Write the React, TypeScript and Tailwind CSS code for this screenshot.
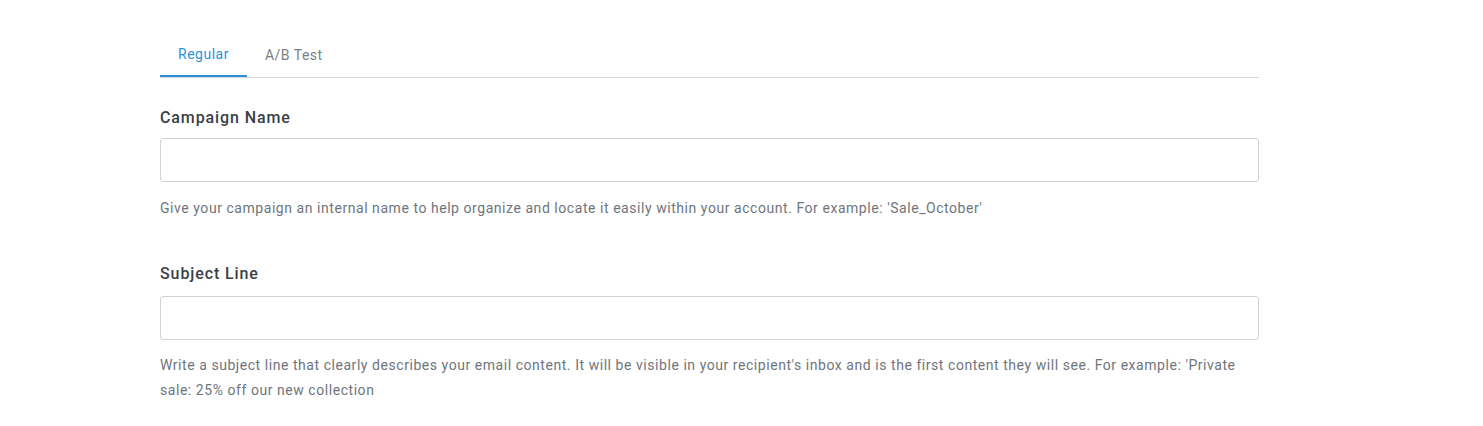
export default function App() {
  return (
    <div className="min-h-[426px] bg-white" style={{ fontFamily: 'Roboto, "Liberation Sans", sans-serif' }}>
      <div className="ml-[160px] w-[1099px] pt-[33px]">
        <div className="flex border-b border-[#d6d9dd]">
          <div className="px-[18px] h-[44px] flex items-center text-[14px] tracking-[0.5px] text-[#2d8fd9] border-b-2 border-[#2d8fd9] -mb-px">Regular</div>
          <div className="px-[18px] h-[44px] flex items-center text-[14px] tracking-[0.5px] text-[#7a8089]">A/B Test</div>
        </div>
        <div className="mt-[30px] text-[16px] font-medium tracking-[0.9px] text-[#3a3f47] leading-[20px]">Campaign Name</div>
        <input className="mt-[10px] block w-full h-[44px] border border-[#cfd3d8] rounded-[3px] outline-none px-3" />
        <div className="mt-[14px] text-[14px] tracking-[0.55px] text-[#6f757d] leading-[25px]">Give your campaign an internal name to help organize and locate it easily within your account. For example: 'Sale_October'</div>
        <div className="mt-[43px] text-[16px] font-medium tracking-[0.9px] text-[#3a3f47] leading-[20px]">Subject Line</div>
        <input className="mt-[12px] block w-full h-[44px] border border-[#cfd3d8] rounded-[3px] outline-none px-3" />
        <div className="mt-[13px] text-[14px] tracking-[0.55px] text-[#6f757d] leading-[25px]">Write a subject line that clearly describes your email content. It will be visible in your recipient's inbox and is the first content they will see. For example: 'Private sale: 25% off our new collection</div>
      </div>
    </div>
  );
}
